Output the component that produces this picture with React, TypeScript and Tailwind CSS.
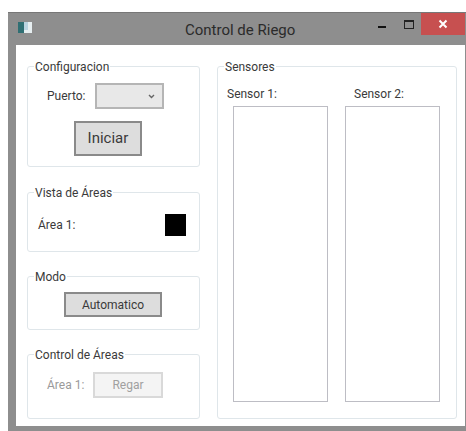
import React from 'react';

const Group: React.FC<{ title: string; className: string; bodyClassName: string; children: React.ReactNode }> = ({
  title,
  className,
  bodyClassName,
  children,
}) => (
  <fieldset className={`min-w-0 rounded-[3px] border border-[#dfe6ea] ${className}`}>
    <legend className="ml-[6px] px-[1px] text-[12px] leading-[17px] text-[#3a3a3a]">
      <span className="relative top-[1px]">{title}</span>
    </legend>
    <div className={bodyClassName}>{children}</div>
  </fieldset>
);

const App: React.FC = () => {
  return (
    <div className="h-[431px] w-[466px] overflow-hidden bg-white pl-[8px] pt-[12px] font-['Roboto','Liberation_Sans',sans-serif]">
      <div className="flex h-[419px] w-[458px] flex-col border-t border-[#777] bg-[#8e8e8e]">
        {/* Title bar */}
        <div className="flex h-[32px] items-start">
          <div className="ml-[10px] mt-[9px] flex h-[11px] w-[14px] bg-[#e6eef0]">
            <div className="h-full w-[6px] bg-[#2f6f73]" />
            <div className="h-[8px] w-[4px] bg-[#b9d3e0]" />
          </div>
          <div className="ml-[153px] mt-[6px] w-[111px] whitespace-nowrap text-[15px] leading-[22px] text-[#2b2b2b]">
            Control de Riego
          </div>
          <div className="ml-[82px] mt-[13px] h-[2px] w-[8px] bg-[#111]" />
          <div className="ml-[18px] mt-[7px] h-[9px] w-[10px] border border-t-2 border-[#222]" />
          <div className="ml-[7px] flex h-[22px] w-[44px] items-center justify-center bg-[#c75050]">
            <svg width="10" height="10" viewBox="0 0 10 10">
              <path d="M1.5 1.5l7 7M8.5 1.5l-7 7" stroke="#fff" strokeWidth="2" fill="none" />
            </svg>
          </div>
        </div>

        {/* Client area */}
        <div className="ml-[8px] mr-[1px] flex h-[381px] gap-[17px] bg-white pl-[11px] pt-[13px]">
          <div className="flex w-[173px] flex-col gap-[16px]">
            <Group title="Configuracion" className="h-[109px]" bodyClassName="flex flex-col items-start">
              <div className="mt-[8px] flex h-[26px] items-center">
                <span className="ml-[19px] w-[48px] text-[12px] text-[#3a3a3a]">Puerto:</span>
                <div className="flex h-[26px] w-[69px] items-center justify-end border-2 border-[#b5b5b5] bg-[#e8e8e8] pr-[7px]">
                  <svg width="7" height="5" viewBox="0 0 7 5">
                    <path d="M1 1l2.5 2.5L6 1" stroke="#666" strokeWidth="1.4" fill="none" />
                  </svg>
                </div>
              </div>
              <div className="ml-[46px] mt-[12px] flex h-[35px] w-[68px] items-center justify-center border-2 border-[#8a8a8a] bg-[#dddddd] text-[15px] text-[#3a3a3a]">
                Iniciar
              </div>
            </Group>

            <Group title="Vista de Áreas" className="mt-[1px] h-[68px]" bodyClassName="flex items-start justify-between pl-[10px] pr-[13px]">
              <span className="mt-[15px] text-[12px] leading-[18px] text-[#3a3a3a]">Área 1:</span>
              <div className="mt-[13px] h-[22px] w-[21px] bg-black" />
            </Group>

            <Group title="Modo" className="h-[62px]" bodyClassName="pl-[36px]">
              <div className="mt-[7px] flex h-[25px] w-[98px] items-center justify-center border-2 border-[#8a8a8a] bg-[#dddddd] text-[12px] text-[#3a3a3a]">
                Automatico
              </div>
            </Group>

            <Group title="Control de Áreas" className="h-[73px]" bodyClassName="flex items-center pl-[19px] pt-[9px]">
              <span className="w-[46px] text-[12px] text-[#9a9a9a]">Área 1:</span>
              <div className="flex h-[26px] w-[70px] items-center justify-center border-2 border-[#d9d9d9] bg-[#f4f4f4] text-[12px] text-[#a0a0a0]">
                Regar
              </div>
            </Group>
          </div>

          <Group title="Sensores" className="h-[361px] w-[240px]" bodyClassName="grid grid-cols-[112px_95px] pl-[15px]">
            <div>
              <div className="ml-[-6px] mt-[10px] h-[18px] text-[12px] leading-[18px] text-[#3a3a3a]">Sensor 1:</div>
              <div className="mt-[3px] h-[296px] w-[95px] border border-[#bdbdc4]" />
            </div>
            <div>
              <div className="ml-[9px] mt-[10px] h-[18px] text-[12px] leading-[18px] text-[#3a3a3a]">Sensor 2:</div>
              <div className="mt-[3px] h-[296px] w-[95px] border border-[#bdbdc4]" />
            </div>
          </Group>
        </div>
      </div>
    </div>
  );
};

export default App;
